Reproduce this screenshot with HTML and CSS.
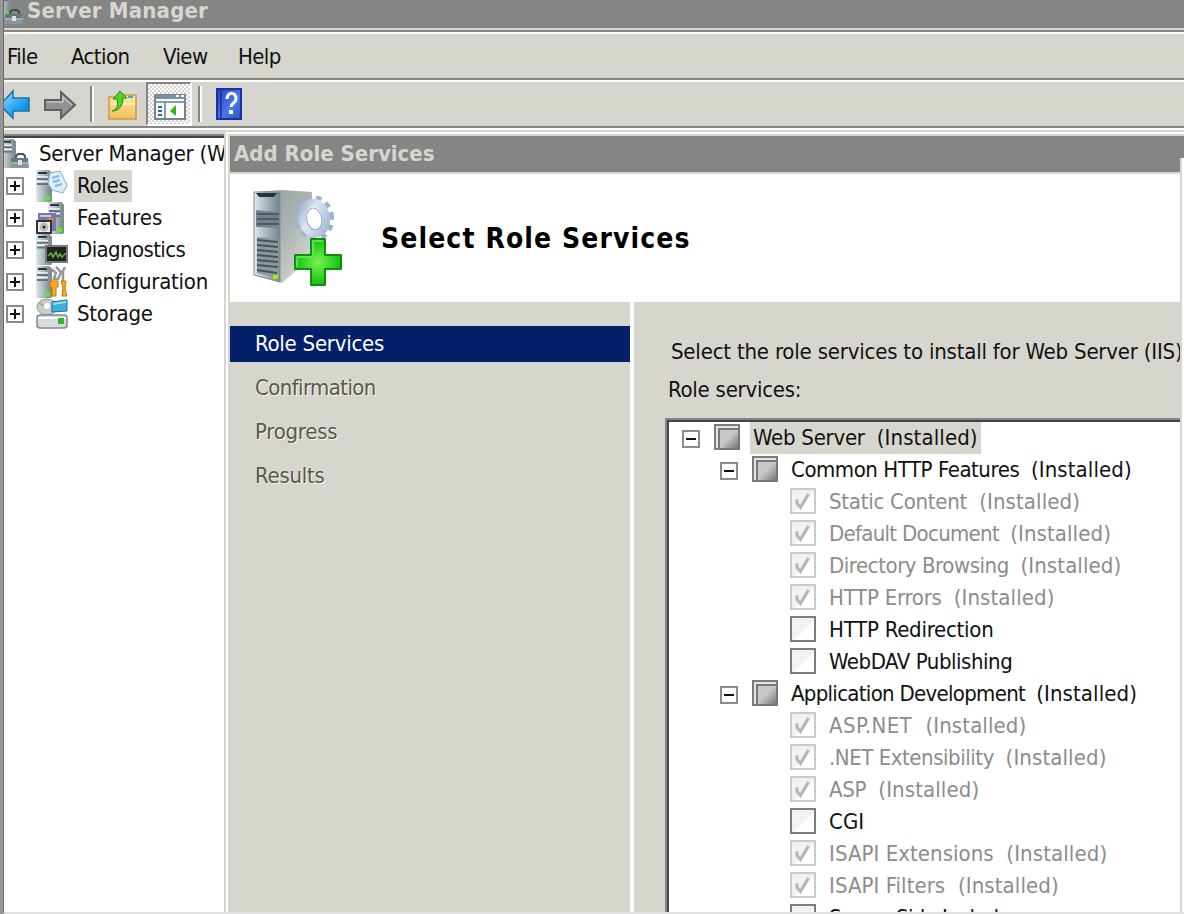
FILE: index.html
```
<!DOCTYPE html>
<html lang="en">
<head>
<meta charset="utf-8">
<title>Server Manager</title>
<link rel="stylesheet" href="styles.css">
</head>
<body>
<svg class="defs" width="0" height="0">
  <defs>
    <linearGradient id="steel" x1="0" x2="1" y1="0" y2="0"><stop offset="0" stop-color="#dde7ec"/><stop offset="1" stop-color="#71828a"/></linearGradient>
    <linearGradient id="blue" x1="0" x2="1" y1="0" y2="1"><stop offset="0" stop-color="#a4e2ff"/><stop offset=".6" stop-color="#20a3f4"/><stop offset="1" stop-color="#0b6fc4"/></linearGradient>
    <linearGradient id="folder" x1="0" x2="0" y1="0" y2="1"><stop offset="0" stop-color="#ffe9a8"/><stop offset="1" stop-color="#f2bf58"/></linearGradient>
    <linearGradient id="help" x1="0" x2="1" y1="0" y2="1"><stop offset="0" stop-color="#2a45c0"/><stop offset=".6" stop-color="#4a7aea"/><stop offset="1" stop-color="#2850c8"/></linearGradient>
    <linearGradient id="side" x1="0" x2="1" y1="0" y2="1"><stop offset="0" stop-color="#8d9794"/><stop offset=".5" stop-color="#adb3b0"/><stop offset="1" stop-color="#dfe1df"/></linearGradient>
    <linearGradient id="gear" x1="0" x2="1" y1="0" y2="1"><stop offset="0" stop-color="#9fb3ce"/><stop offset=".4" stop-color="#dbe6f4"/><stop offset="1" stop-color="#a3b7d2"/></linearGradient>
    <radialGradient id="plus"><stop offset="0" stop-color="#7cf250"/><stop offset="1" stop-color="#10c010"/></radialGradient>
    <pattern id="dither" width="4" height="4" patternUnits="userSpaceOnUse"><rect width="4" height="4" fill="#fff"/><path d="M0 0h2v2h-2zM2 2h2v2h-2z" fill="#d6d6ce"/></pattern>
    <symbol id="server" viewBox="0 0 16 32" preserveAspectRatio="none">
      <path d="M0 0h13l3 3v28l-2 1H0z" fill="url(#steel)"/>
      <path d="M13 0l3 3v28l-3 1z" fill="#7d8d94"/>
      <path d="M2 2h9v2H2z" fill="#26363e"/><path d="M1 9h11M1 14h11" stroke="#627680" stroke-width="2"/><path d="M1 7h11M1 11.5h11" stroke="#edf4f6" stroke-width="1.6"/>
      <path d="M10 26h4v4h-4z" fill="#58f00c"/>
    </symbol>
    <symbol id="chest" viewBox="0 0 20 16"><path d="M6 5V3l2-2h5l2 2v2" fill="none" stroke="#46525a" stroke-width="2"/><path d="M1 5h17l1 10H1z" fill="#8797a0"/><path d="M1 5h17v4H1z" fill="#637884"/><path d="M1 10h18" stroke="#b9c5ca"/><path d="M8 7h4v5H8z" fill="#dde5e8"/></symbol>
    <symbol id="tick" viewBox="0 0 22 22"><path d="M5 9.500v4l3.500 4L16.500 4" fill="none" stroke="#b4b4b4" stroke-width="3"/></symbol>
  </defs>
</svg>

<div class="desktop">
  <div class="window">
    <header class="titlebar">
      <svg class="app-icon" width="20" height="28" viewBox="0 0 20 28"><use href="#server" x="-7" y="-14" width="14" height="32"/><use href="#chest" x="0" y="9" width="20" height="16"/></svg>
      <span class="title-text">Server Manager</span>
    </header>
    <nav class="menubar"><span class="m-file">File</span><span class="m-action">Action</span><span class="m-view">View</span><span class="m-help">Help</span></nav>
    <div class="toolbar">
      <svg width="240" height="44" viewBox="4 82 240 44">
        <path d="M0 105L13 91v7h16v13H13v7z" fill="url(#blue)" stroke="#2374aa" stroke-width="1.6"/>
        <path d="M45 100h16v-8l14 13-14 13v-8H45z" fill="#929292" stroke="#606060" stroke-width="2"/>
        <path d="M47 102h16v-5l9 8" fill="none" stroke="#c4c4c4" stroke-width="1.5"/>
        <path d="M91 86v36M199 86v36" stroke="#858585" stroke-width="2"/><path d="M93 86v36M201 86v36" stroke="#fff" stroke-width="2"/>
        <path d="M109 97h13l3-2h11v24h-27z" fill="url(#folder)" stroke="#c79d48" stroke-width="1.5"/><path d="M110 104h25" stroke="#fff0bd" stroke-width="2"/><path d="M128 97h5" stroke="#4d9fd8" stroke-width="2"/>
        <path d="M112 111c6-2 6-6 5-12h-4l7-8 7 7h-4c0 8-4 13-11 13z" fill="#53d12b" stroke="#258918"/>
        <path d="M147 83h44v42h-44z" fill="url(#dither)"/><path d="M147 125V83h44" fill="none" stroke="#858585" stroke-width="2"/><path d="M147 125h44V83" fill="none" stroke="#fff" stroke-width="2"/>
        <path d="M155 95h30v24h-30z" fill="#f9fbfb" stroke="#78848a" stroke-width="2"/><path d="M155 95h30v4h-30z" fill="#7890aa"/><path d="M156 102h28M165 103v15" stroke="#8b9ba4" stroke-width="2"/><path d="M176 96h3M181 96h3" stroke="#fff" stroke-width="2"/><path d="M158 107h4M158 111h4M158 115h4" stroke="#2468bd" stroke-width="2"/><path d="M170 111l6-6v11z" fill="#31b814"/>
        <path d="M217 89h24v30h-24z" fill="url(#help)" stroke="#1733a0" stroke-width="2"/><path d="M221 90v28" stroke="#17329e" stroke-width="1.5"/><path d="M227 99c0-8 10-7 9 0 0 4-5 4-5 8" fill="none" stroke="#fff" stroke-width="3"/><path d="M229 110h4v4h-4z" fill="#fff"/>
      </svg>
    </div>
    <main class="workspace">
      <aside class="tree">
        <div class="tree-row root"><svg width="28" height="32" viewBox="0 0 28 32"><use href="#server" x="-4" y="1" width="16" height="29"/><use href="#chest" x="6" y="15" width="20" height="16"/></svg><span class="tree-label t2">Server Manager (W</span></div>
        <div class="tree-row"><i class="expander plus"></i><svg width="32" height="32"><use href="#server" width="16" height="32"/><path d="M14 3l10-2 7 14-4 8-11-3-4-7z" fill="#dceefa" stroke="#80add0"/><path d="M16 8l7-2M17 12l7-2M19 16l7-2" stroke="#82b7e2" stroke-width="2"/></svg><span class="tree-label selected t2">Roles</span></div>
        <div class="tree-row"><i class="expander plus"></i><svg width="32" height="32"><use href="#server" x="12" width="16" height="32"/><path d="M2 11h18v18H2z" fill="#7779ad"/><path d="M4 14h11" stroke="#c7c9ef" stroke-width="2"/><path d="M11 16h6v5h-6z" fill="#d9852f"/><path d="M1 19h14v12H1z" fill="#eee" stroke="#333" stroke-width="2"/><circle cx="8" cy="25" r="4.500" fill="#bbb"/><circle cx="8" cy="25" r="1.500" fill="#222"/></svg><span class="tree-label t3">Features</span></div>
        <div class="tree-row"><i class="expander plus"></i><svg width="32" height="32"><use href="#server" width="16" height="31"/><path d="M10 12h21v16H10z" fill="#20251b" stroke="#77777d" stroke-width="2"/><path d="M12 22l3-3 2 4 3-5 2 5 2-3 2 3 4-4" fill="none" stroke="#6fa641" stroke-width="1.600"/></svg><span class="tree-label">Diagnostics</span></div>
        <div class="tree-row"><i class="expander plus"></i><svg width="32" height="32"><use href="#server" width="16" height="32"/><path d="M15 3l5 4-2 6h4l3-7-5-5M29 1l-2 4v10" fill="none" stroke="#969696" stroke-width="2.500"/><path d="M14 15h8v6h-2v9h-4v-9h-2zM25 15h5l-1 7 2 8h-5l1-8z" fill="#f4af19" stroke="#c6780c"/></svg><span class="tree-label t2">Configuration</span></div>
        <div class="tree-row"><i class="expander plus"></i><svg width="32" height="32"><ellipse cx="11" cy="9" rx="10" ry="8" fill="#c8cccb" stroke="#969b9b"/><circle cx="11" cy="8" r="3" fill="#fff"/><path d="M3 5l5 3" stroke="#7ac97a" stroke-width="2"/><path d="M16 4l15-2v11l-15 1z" fill="#3eb0de" stroke="#13749f"/><path d="M17 6l13-2" stroke="#a0ddf3" stroke-width="2"/><rect x="1" y="17" width="30" height="13" rx="3" fill="#d9d9e0" stroke="#85858d" stroke-width="1.500"/><path d="M2 20h28" stroke="#fff" stroke-width="2"/><path d="M22 20h6v6h-6z" fill="#28bd20"/></svg><span class="tree-label t2">Storage</span></div>
      </aside>
      <section class="dialog">
        <h2 class="dialog-title">Add Role Services</h2>
        <div class="dialog-page">
          <header class="page-head">
            <svg width="92" height="100" viewBox="252 188 92 100">
              <path d="M254 192l28-2 30 2v65l-30 26-28-8z" fill="url(#side)"/>
              <path d="M254 192h26v90l-26-7z" fill="url(#steel)" stroke="#858d91"/><path d="M256 193h21l-3 4h-15z" fill="#28343a"/>
              <path d="M256 210l23 2v16l-23-1z" fill="#77828a"/><path d="M257 214h22M257 219h22M257 224h22" stroke="#3e4e58" stroke-width="1.500"/>
              <path d="M257 237l22 2v39l-22-5z" fill="#8d989d"/><path d="M257 240l21 2M257 245l21 2M257 250l21 2M257 255l21 2M257 260l21 2M257 265l21 2M257 270l20 3" stroke="#44525a" stroke-width="2"/><path d="M273 275h5v4h-5z" fill="#9df20b"/>
              <g transform="rotate(-12 314 218)"><ellipse cx="314" cy="218" rx="17.500" ry="20.500" fill="none" stroke="#9db2ce" stroke-width="5" stroke-dasharray="5.400 5.200"/><ellipse cx="314" cy="218" rx="12" ry="15.500" fill="#fff" stroke="url(#gear)" stroke-width="8"/><ellipse cx="314" cy="219" rx="7.500" ry="11" fill="#fff" stroke="#93a9c7"/></g>
              <path d="M311 239h14v16h16v14h-16v16h-14v-16h-16v-14h16z" fill="url(#plus)" stroke="#0b920b" stroke-width="2" stroke-linejoin="round"/><path d="M313 254v-13h10M297 267v-10h16" fill="none" stroke="#75e85e" stroke-width="1.500"/>
            </svg>
            <h1 class="page-title">Select Role Services</h1>
          </header>
          <div class="page-body">
            <nav class="steps"><div class="step current t2">Role Services</div><div class="step">Confirmation</div><div class="step t2">Progress</div><div class="step t2">Results</div></nav>
            <div class="content">
              <p class="intro">Select the role services to install for Web Server (IIS)</p>
              <p class="list-label t2">Role services:</p>
              <div class="role-list">
                <div class="role l0"><i class="expander"></i><i class="check mixed"></i><span class="role-label selected t2">Web Server&nbsp; <span class="state">(Installed)</span></span></div>
                <div class="role l1"><i class="expander"></i><i class="check mixed"></i><span class="role-label t1">Common HTTP Features&nbsp; <span class="state">(Installed)</span></span></div>
                <div class="role l2 off"><i class="check"><svg width="22" height="22"><use href="#tick"/></svg></i><span class="role-label t2">Static Content&nbsp; <span class="state">(Installed)</span></span></div>
                <div class="role l2 off"><i class="check"><svg width="22" height="22"><use href="#tick"/></svg></i><span class="role-label t0">Default Document&nbsp; <span class="state">(Installed)</span></span></div>
                <div class="role l2 off"><i class="check"><svg width="22" height="22"><use href="#tick"/></svg></i><span class="role-label t1">Directory Browsing&nbsp; <span class="state">(Installed)</span></span></div>
                <div class="role l2 off"><i class="check"><svg width="22" height="22"><use href="#tick"/></svg></i><span class="role-label t2">HTTP Errors&nbsp; <span class="state">(Installed)</span></span></div>
                <div class="role l2"><i class="check"></i><span class="role-label t2">HTTP Redirection</span></div>
                <div class="role l2"><i class="check"></i><span class="role-label t1">WebDAV Publishing</span></div>
                <div class="role l1"><i class="expander"></i><i class="check mixed"></i><span class="role-label t0">Application Development&nbsp; <span class="state">(Installed)</span></span></div>
                <div class="role l2 off"><i class="check"><svg width="22" height="22"><use href="#tick"/></svg></i><span class="role-label t4">ASP.NET&nbsp; <span class="state">(Installed)</span></span></div>
                <div class="role l2 off"><i class="check"><svg width="22" height="22"><use href="#tick"/></svg></i><span class="role-label t1">.NET Extensibility&nbsp; <span class="state">(Installed)</span></span></div>
                <div class="role l2 off"><i class="check"><svg width="22" height="22"><use href="#tick"/></svg></i><span class="role-label t2">ASP&nbsp; <span class="state">(Installed)</span></span></div>
                <div class="role l2"><i class="check"></i><span class="role-label t3">CGI</span></div>
                <div class="role l2 off"><i class="check"><svg width="22" height="22"><use href="#tick"/></svg></i><span class="role-label t3">ISAPI Extensions&nbsp; <span class="state">(Installed)</span></span></div>
                <div class="role l2 off"><i class="check"><svg width="22" height="22"><use href="#tick"/></svg></i><span class="role-label t3">ISAPI Filters&nbsp; <span class="state">(Installed)</span></span></div>
                <div class="role l2"><i class="check"></i><span class="role-label">Server Side Includes</span></div>
              </div>
            </div>
          </div>
        </div>
      </section>
    </main>
  </div>
</div>
</body>
</html>
```
FILE: styles.css
```
* { box-sizing: border-box; }
body { margin: 0; width: 1184px; height: 914px; overflow: hidden; font: 22px/32px "DejaVu Sans Condensed", "DejaVu Sans", sans-serif; font-stretch: condensed; letter-spacing: -0.6px; color: #111; white-space: nowrap; }
.defs { position: absolute; }
svg { display: block; flex: none; }
h1, h2, p { margin: 0; }
.t0 { letter-spacing: -0.7px; }
.t1 { letter-spacing: -0.45px; }
.t2 { letter-spacing: -0.25px; }
.t3 { letter-spacing: 0.05px; }
.t4 { letter-spacing: 0.4px; }
.state { letter-spacing: 0.1px; }
.desktop { height: 914px; padding-left: 3px; background: #999794; }
.window { height: 914px; display: flex; flex-direction: column; border-left: 1px solid #6b6b69; border-bottom: 2px solid #e0e0e0; background: #d6d6ce; overflow: hidden; }
.titlebar { height: 28px; flex: none; display: flex; align-items: flex-start; gap: 3px; background: #858585; color: #d6d6ce; font-weight: bold; }
.title-text { line-height: 22px; letter-spacing: 0.2px; }
.menubar { height: 50px; flex: none; margin-top: 2px; display: flex; align-items: center; border-top: 2px solid #858585; border-bottom: 2px solid #858585; box-shadow: inset 0 2px #fff; padding: 3px 0 0 3px; }
.m-file { width: 64px; }
.m-action { width: 92px; }
.m-view { width: 75px; }
.toolbar { height: 48px; flex: none; border-top: 2px solid #fff; border-bottom: 2px solid #858585; }
.workspace { flex: 1; min-height: 0; display: flex; border-top: 2px solid #fff; }
.tree { width: 220px; margin-top: 4px; padding-top: 2px; border-top: 2px solid #858585; box-shadow: inset 0 2px #444; background: #fff; overflow: hidden; flex: none; }
.tree-row { height: 32px; display: flex; align-items: center; padding-left: 2px; }
.tree-row .expander { margin-right: 12px; }
.tree-row .tree-label { padding: 0 3px; margin-left: 6px; }
.tree-row.root { padding-left: 0; }
.root .tree-label { margin-left: 4px; }
.selected { background: #d6d6ce; }
.expander { width: 18px; height: 18px; flex: none; border: 2px solid #8b8b8b; background: linear-gradient(#111, #111) center / 10px 2px no-repeat #fff; }
.expander.plus { background: linear-gradient(#111, #111) center / 10px 2px no-repeat, linear-gradient(#111, #111) center / 2px 10px no-repeat, #fff; }
.dialog { flex: 1; min-width: 0; margin: 2px 0 0 2px; padding-left: 2px; border-left: 2px solid #fff; border-top: 2px solid #fff; display: flex; flex-direction: column; }
.dialog-title { height: 36px; flex: none; margin-top: 2px; padding-left: 4px; background: #858585; color: #d6d6ce; font-size: 22px; line-height: 36px; letter-spacing: 0; }
.dialog-page { flex: 1; min-height: 0; margin-top: -14px; padding-top: 16px; border-right: 2px solid #fff; background: linear-gradient(#d6d6ce, #d6d6ce) right top / 2px 100% no-repeat; display: flex; flex-direction: column; }
.page-head { height: 128px; flex: none; margin-right: 2px; display: flex; align-items: center; gap: 37px; padding-left: 22px; background: #fff; }
.page-title { padding-top: 2px; font-size: 28px; line-height: 36px; letter-spacing: 1.1px; color: #000; }
.page-body { flex: 1; min-height: 0; display: flex; margin-right: 2px; overflow: hidden; }
.steps { width: 404px; flex: none; display: flex; flex-direction: column; gap: 8px; padding-top: 24px; border-right: 4px solid #fff; }
.step { height: 36px; line-height: 36px; padding-left: 25px; color: #5a5a4c; text-shadow: 1px 1px #f4f4ec; }
.step.current { background: #04206a; color: #fff; text-shadow: none; }
.content { flex: 1; min-width: 0; padding: 34px 0 0 31px; }
.intro { padding-left: 6px; letter-spacing: -0.2px; }
.list-label { padding: 6px 0 12px 3px; }
.role-list { height: 520px; padding: 2px 0 0 2px; border: 2px solid #858585; border-right: 0; box-shadow: inset 2px 2px #444; background: #fff; }
.role { height: 32px; display: flex; align-items: center; padding-left: 13px; }
.l1 { padding-left: 51px; }
.l2 { padding-left: 121px; }
.role .expander { margin: 2px 14px 0 0; }
.check { width: 26px; height: 26px; flex: none; margin-bottom: 2px; border: 2px solid #7c7c7c; background: linear-gradient(135deg, #f2f2f2 50%, #fff 60%); }
.check.mixed { background: #e4e4e4; padding: 2px; }
.mixed::before { content: ""; display: block; width: 18px; height: 18px; border: 2px solid #777; background: linear-gradient(135deg, #c8c8c8 45%, #777); }
.off .check { border-color: #cacaca; }
.off { color: #8c8c8c; }
.role-label { padding: 0 3px; margin-left: 10px; }
```
